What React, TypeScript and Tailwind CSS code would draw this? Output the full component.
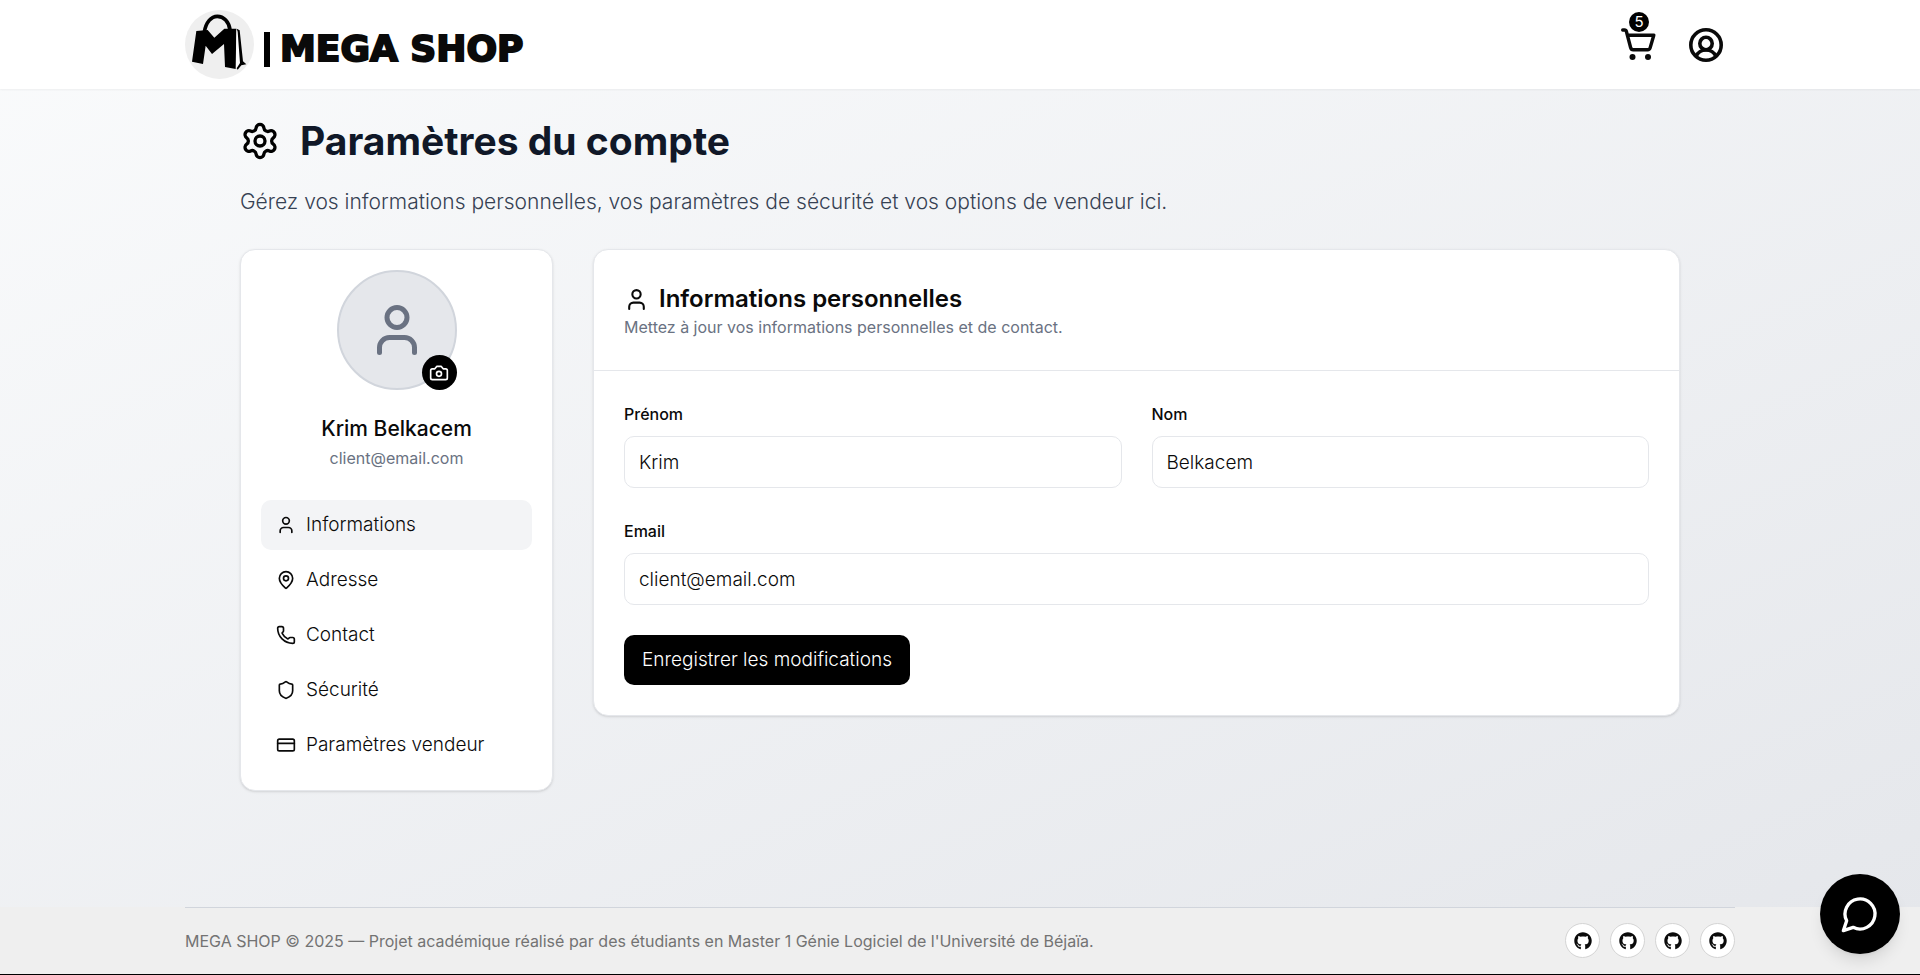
import React from "react";
import { CreditCard, MapPin, Phone, Settings, Shield, User } from "lucide-react";
import { FaGithub } from "react-icons/fa";

function Logo() {
  return (
    <svg viewBox="45 30 207 207" className="size-[69px] shrink-0" aria-hidden="true">
      <circle cx="148.5" cy="133.5" r="103.5" fill="#efefef" />
      <path d="M103 96C108 66 124 49 142 49C161 49 177 65 180 90" fill="none" stroke="#000" strokeWidth="11" />
      <path d="M79 93L113 90L133 113L163 86H199L197 207L165 201L162 132L126 162L107 137L99 192L66 185Z" fill="#000" />
      <path d="M200 90L205 92L214 190L202 204L198 202Z" fill="#fff" />
      <path d="M200 86L209 91L219 184L229 193L214 196L203 209L200 205L210 189L203 95Z" fill="#000" />
    </svg>
  );
}

function CartIcon() {
  return (
    <svg viewBox="1 1 36 34" className="h-[34px] w-9" fill="none" stroke="currentColor" strokeWidth="3.4" strokeLinecap="round" strokeLinejoin="round" aria-hidden="true">
      <path d="M2.700 3H4.600Q6 3 6.400 4.500L10.600 20.500Q11.200 22.800 13.200 22.800H27.600Q29.600 22.800 30.200 20.600L33.800 8.200H8" />
      <circle cx="12.500" cy="30" r="3" fill="currentColor" stroke="none" />
      <circle cx="28" cy="30" r="3" fill="currentColor" stroke="none" />
    </svg>
  );
}

function AccountIcon() {
  return (
    <svg viewBox="0 0 34 34" className="size-[34px]" fill="none" stroke="currentColor" strokeWidth="3.6" aria-hidden="true">
      <circle cx="17" cy="17" r="15.200" />
      <circle cx="17" cy="15.500" r="6.200" />
      <path d="M7 28.500C9 24 12.500 22 17 22S25 24 27 28.500" />
    </svg>
  );
}

function CameraIcon() {
  return (
    <svg viewBox="0 0 24 24" className="size-5" fill="none" stroke="currentColor" strokeWidth="2" strokeLinecap="round" strokeLinejoin="round" aria-hidden="true">
      <path d="M14.500 4h-5L7 7H4a2 2 0 0 0-2 2v9a2 2 0 0 0 2 2h16a2 2 0 0 0 2-2V9a2 2 0 0 0-2-2h-3z" />
      <circle cx="12" cy="13" r="3" />
    </svg>
  );
}

function ChatIcon() {
  return (
    <svg viewBox="0 0 24 24" className="size-10" fill="none" stroke="currentColor" strokeWidth="2" strokeLinecap="round" strokeLinejoin="round" aria-hidden="true">
      <path d="M7.900 20A9 9 0 1 0 4 16.100L2 22Z" />
    </svg>
  );
}

const sections = [
  { label: "Informations", icon: User },
  { label: "Adresse", icon: MapPin },
  { label: "Contact", icon: Phone },
  { label: "Sécurité", icon: Shield },
  { label: "Paramètres vendeur", icon: CreditCard },
];

function Field({ id, label, value, type = "text" }: { id: string; label: string; value: string; type?: string }) {
  return (
    <div className="flex min-w-0 flex-col gap-3">
      <label htmlFor={id} className="text-base leading-5 font-medium text-neutral-950">{label}</label>
      <input
        id={id}
        type={type}
        defaultValue={value}
        className="h-[52px] w-full rounded-[10px] border border-gray-200 bg-white px-[14px] text-[19px] font-light text-neutral-950 outline-none focus:border-gray-500"
      />
    </div>
  );
}

export default function App() {
  return (
    <div className="flex min-h-screen flex-col font-['Inter','Liberation_Sans',sans-serif] text-neutral-950">
      <header className="relative bg-white shadow-xs">
        <div className="mx-auto flex h-[89px] w-full max-w-[1550px] items-center justify-between">
          <a href="#accueil" className="flex items-center gap-[10px]">
            <Logo />
            <span className="mt-[10px] h-[35px] w-[6px] bg-black" />
            <span className="mt-2 font-['DejaVu_Sans',sans-serif] text-[36px] leading-10 font-bold [-webkit-text-stroke:2px_currentColor]">MEGA SHOP</span>
          </a>
          <nav aria-label="Compte" className="flex items-center gap-8 pr-3">
            <a href="#panier" aria-label="Panier" className="relative block">
              <CartIcon />
              <span className="absolute -top-4 left-2 flex size-5 items-center justify-center rounded-full bg-black text-[15px] leading-5 text-white">5</span>
            </a>
            <a href="#compte" aria-label="Mon compte"><AccountIcon /></a>
          </nav>
        </div>
      </header>

      <main className="flex-1 bg-linear-to-br from-gray-50 to-gray-200 pt-[27px] pb-10">
        <div className="mx-auto w-full max-w-[1440px]">
          <div className="flex items-center gap-5">
            <Settings className="size-10 text-black" />
            <h1 className="text-[39px] leading-[50px] font-bold text-gray-900">Paramètres du compte</h1>
          </div>
          <p className="mt-[21px] text-[21px] leading-[30px] font-light text-gray-700">
            Gérez vos informations personnelles, vos paramètres de sécurité et vos options de vendeur ici.
          </p>

          <div className="mt-8 grid grid-cols-[313px_1fr] items-start gap-10">
            <aside className="rounded-[15px] border border-gray-200 bg-white p-5 shadow">
              <div className="flex flex-col items-center">
                <div className="relative flex size-[120px] items-center justify-center rounded-full border-2 border-gray-300 bg-gray-200 text-gray-500">
                  <User className="size-[60px]" />
                  <button type="button" aria-label="Changer la photo" className="absolute -right-[2px] -bottom-[2px] flex size-[35px] items-center justify-center rounded-full bg-black text-white">
                    <CameraIcon />
                  </button>
                </div>
                <h2 className="mt-6 text-[21px] leading-[30px] font-medium">Krim Belkacem</h2>
                <p className="text-base leading-7 text-gray-500">client@email.com</p>
              </div>
              <nav aria-label="Sections" className="mt-7 flex flex-col gap-[5px]">
                {sections.map(({ label, icon: Icon }, i) => (
                  <button
                    key={label}
                    type="button"
                    className={
                      i === 0
                        ? "flex h-[50px] items-center gap-[10px] rounded-[10px] bg-gray-100 px-[15px] text-left text-[19px] font-light"
                        : "flex h-[50px] items-center gap-[10px] rounded-[10px] px-[15px] text-left text-[19px] font-light hover:bg-gray-100"
                    }
                  >
                    <Icon className="size-5" />
                    {label}
                  </button>
                ))}
              </nav>
            </aside>

            <section className="rounded-[15px] border border-gray-200 bg-white shadow">
              <div className="border-b border-gray-200 px-[30px] pt-[34px] pb-[30px]">
                <h2 className="flex items-center gap-[10px] text-[24px] leading-[30px] font-semibold">
                  <User className="size-[25px]" />
                  Informations personnelles
                </h2>
                <p className="text-base leading-[26px] text-gray-500">Mettez à jour vos informations personnelles et de contact.</p>
              </div>
              <form className="flex flex-col items-start gap-[30px] px-[30px] pt-[33px] pb-[30px]" onSubmit={(e) => e.preventDefault()}>
                <div className="grid w-full grid-cols-2 gap-x-[30px] gap-y-[33px]">
                  <Field id="prenom" label="Prénom" value="Krim" />
                  <Field id="nom" label="Nom" value="Belkacem" />
                  <div className="col-span-2">
                    <Field id="email" label="Email" type="email" value="client@email.com" />
                  </div>
                </div>
                <button type="submit" className="h-[50px] rounded-[10px] bg-black px-[18px] text-[19px] font-light text-white">
                  Enregistrer les modifications
                </button>
              </form>
            </section>
          </div>
        </div>
      </main>

      <footer className="border-b border-black bg-[#efefef]">
        <div className="mx-auto flex w-full max-w-[1550px] items-center justify-between border-t border-gray-300 pt-[15px] pb-4">
          <p className="text-base text-neutral-500">
            MEGA SHOP © 2025 — Projet académique réalisé par des étudiants en Master 1 Génie Logiciel de l'Université de Béjaïa.
          </p>
          <div className="flex gap-[10px]">
            {[1, 2, 3, 4].map((n) => (
              <a key={n} href="#github" aria-label="GitHub" className="flex size-[35px] items-center justify-center rounded-full border border-neutral-300 bg-white">
                <FaGithub className="size-[18px]" />
              </a>
            ))}
          </div>
        </div>
      </footer>

      <button type="button" aria-label="Ouvrir la discussion" className="fixed right-5 bottom-[21px] flex size-20 items-center justify-center rounded-full bg-black text-white shadow-lg">
        <ChatIcon />
      </button>
    </div>
  );
}
